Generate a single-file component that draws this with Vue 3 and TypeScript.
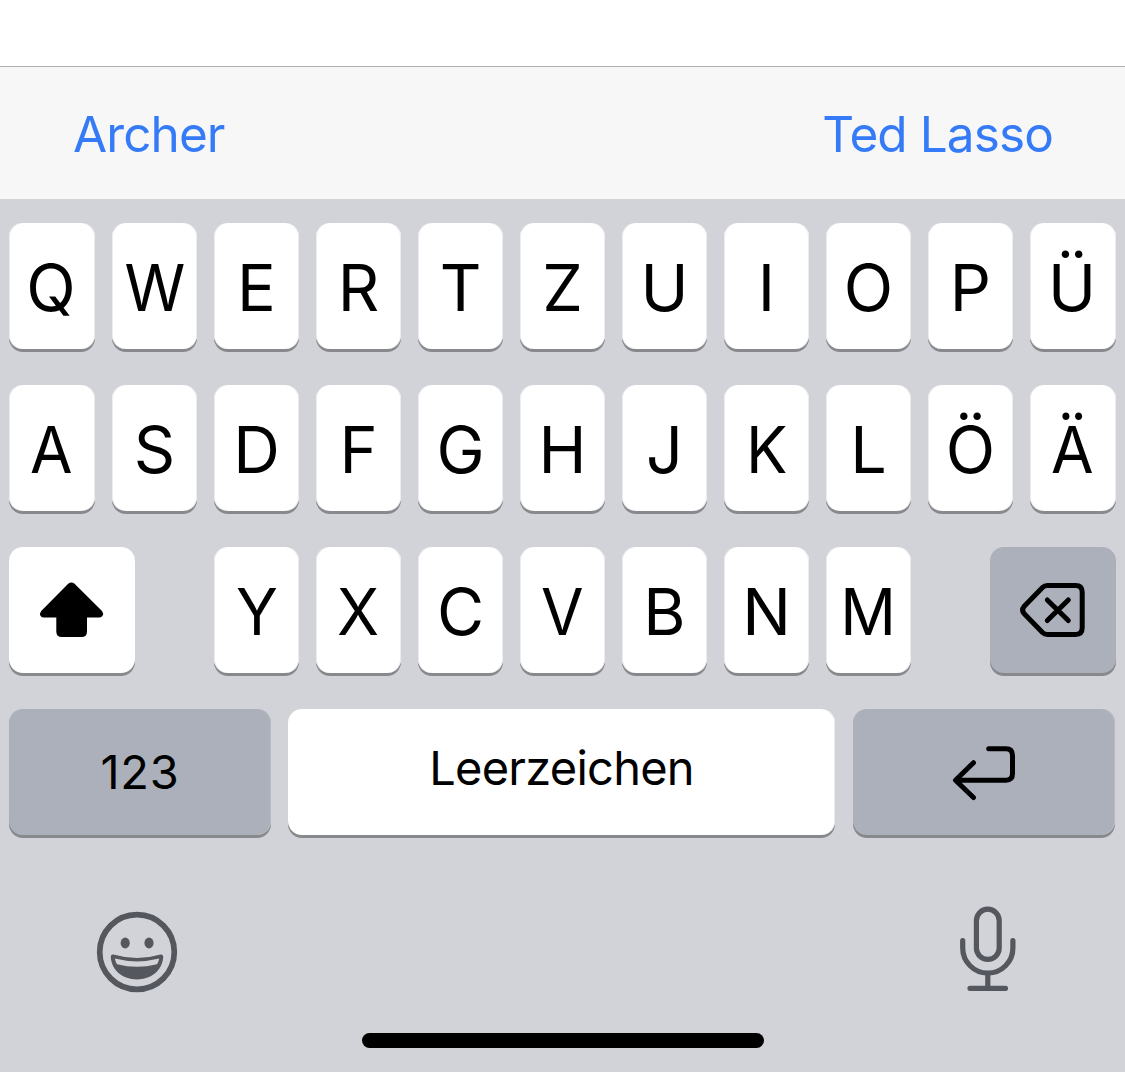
<script setup lang="ts">
const suggestions: string[] = ['Archer', 'Ted Lasso']
const topRow: string[] = [...'QWERTZUIOPÜ']
const homeRow: string[] = [...'ASDFGHJKLÖÄ']
const bottomRow: string[] = [...'YXCVBNM']

// Diagonal and wide capitals are drawn slightly narrower.
const narrow = (k: string): boolean => 'WAÄYXVKM'.includes(k)
</script>

<template>
  <main class="screen">
    <div class="content"></div>
    <div class="suggestions">
      <span v-for="s in suggestions" :key="s" class="suggestion">{{ s }}</span>
    </div>
    <section class="keyboard">
      <div class="row letters">
        <button v-for="k in topRow" :key="k" class="key"><span :class="{ narrow: narrow(k) }">{{ k }}</span></button>
      </div>
      <div class="row letters">
        <button v-for="k in homeRow" :key="k" class="key"><span :class="{ narrow: narrow(k) }">{{ k }}</span></button>
      </div>
      <div class="row third">
        <button class="key wide" aria-label="Shift">
          <svg viewBox="9 547 126 126">
            <path d="M68.2 583.8Q71.4 581.2 74.6 583.8L102 611Q104 613.600 102.400 616Q101.200 617.600 98.800 617.600H87V631.500Q87 637 81.500 637H61.800Q56.300 637 56.300 631.500V617.600H44Q41.600 617.600 40.600 616Q39.200 613.600 41.200 611Z" />
          </svg>
        </button>
        <div class="middle">
          <button v-for="k in bottomRow" :key="k" class="key"><span :class="{ narrow: narrow(k) }">{{ k }}</span></button>
        </div>
        <button class="key wide grey" aria-label="Löschen">
          <svg viewBox="990 547 126 126" class="line">
            <path d="M1047.500 585.600H1075.500Q1082.200 585.600 1082.200 592.300V627.700Q1082.200 634.400 1075.500 634.400H1047.500Q1044.500 634.400 1042.500 632.500L1024 613.500Q1021.200 610 1024 606.500L1042.500 587.500Q1044.500 585.600 1047.500 585.600Z" />
            <path d="M1047.300 600L1068.300 620.500M1068.300 600L1047.300 620.500" />
          </svg>
        </button>
      </div>
      <div class="row fourth">
        <button class="key grey label numbers"><span>123</span></button>
        <button class="key label space"><span>Leerzeichen</span></button>
        <button class="key grey return" aria-label="Return">
          <svg viewBox="853 709 262 126" class="line">
            <path d="M988.700 748.700H1006Q1012.500 748.700 1012.500 755.500V773.500Q1012.500 780.200 1006 780.200H956M973.500 762.700L955.500 780.200L973.500 797.500" />
          </svg>
        </button>
      </div>
      <div class="tools">
        <svg class="tool" width="84" height="90" viewBox="95 905 84 90">
          <circle cx="137" cy="952" r="37.300" fill="none" stroke="#54575d" stroke-width="5.700" />
          <ellipse cx="125.200" cy="943" rx="4.600" ry="5.400" />
          <ellipse cx="149" cy="943" rx="4.600" ry="5.400" />
          <path fill-rule="evenodd" d="M113.500 954.500Q137 961.500 160.500 954.500Q163.500 954.200 163.200 957.500C162 971 151 979.400 137 979.400C123 979.400 112 971 110.800 957.500Q110.500 954.200 113.500 954.500ZM114.800 958.600Q115.500 962 117 964.200Q137 969.200 157 964.200Q158.500 962 159.200 958.600Q137 964.200 114.800 958.600Z" />
        </svg>
        <svg class="tool" width="64" height="90" viewBox="956 905 64 90" fill="none" stroke="#54575d" stroke-width="5.200" stroke-linecap="round">
          <rect x="976.400" y="909.200" width="22.800" height="50.200" rx="11.400" fill="none" />
          <path fill="none" d="M962.700 940.500V948A25.100 25.100 0 0 0 1012.900 948V940.500M987.800 973.500V988M970 988.300H1005.500" />
        </svg>
      </div>
      <div class="home"></div>
    </section>
  </main>
</template>

<style>
body {
  margin: 0;
  background: #fff;
}
</style>

<style scoped>
.screen {
  width: 1125px;
  height: 1072px;
  display: flex;
  flex-direction: column;
  overflow: hidden;
  background: #fff;
  font-family: Inter, 'Liberation Sans', sans-serif;
}
.content {
  height: 66px;
}
.suggestions {
  box-sizing: border-box;
  height: 133px;
  padding: 1px 72px 0 73px;
  border-top: 1px solid #b0b0b1;
  background: #f7f7f7;
  display: flex;
  justify-content: space-between;
  align-items: center;
  color: #357bf7;
  font-size: 49.500px;
  letter-spacing: -0.900px;
}
.keyboard {
  flex: 1;
  display: flex;
  flex-direction: column;
  padding-top: 24px;
  background: #d2d3d9;
}
.row {
  display: flex;
  height: 126px;
  margin: 0 9px 36px;
}
.letters,
.middle {
  display: flex;
  gap: 17px;
}
.key {
  box-sizing: border-box;
  width: 85px;
  height: 126px;
  padding: 2px 0 0;
  border: 0;
  border-radius: 14px;
  background: #fff;
  box-shadow: 0 3px 0 #88898d, inset 1px 0 0 #ececef, inset -1px 0 0 #ececef;
  color: #000;
  font-family: inherit;
  font-size: 64.600px;
  display: flex;
  justify-content: center;
  align-items: center;
  flex: none;
}
.letters .key:first-child,
.letters .key:last-child {
  width: 86px;
  padding-right: 2px;
}
.narrow {
  display: inline-block;
  transform: scaleX(0.955);
}
.third {
  justify-content: space-between;
}
.key.wide {
  width: 126px;
  padding: 0;
  box-shadow: 0 3px 0 #88898d;
}
.key.grey {
  background: #abb0bb;
}
.key svg {
  width: 100%;
  height: 100%;
  display: block;
}
.line {
  fill: none;
  stroke: #000;
  stroke-width: 5;
  stroke-linecap: round;
  stroke-linejoin: round;
}
.fourth {
  gap: 17px;
}
.key.label {
  font-size: 47px;
}
.key.numbers,
.key.return {
  width: 262px;
  padding: 0;
  box-shadow: 0 3px 0 #88898d, inset -1px 0 0 #b8bcc5;
}
.key.numbers {
  padding-bottom: 2px;
  letter-spacing: 0.700px;
}
.key.return {
  margin-left: 1px;
}
.key.space {
  width: 547px;
  padding: 0 0 10px;
  letter-spacing: -0.750px;
  box-shadow: 0 3px 0 #88898d, inset -1px 0 0 #ececef;
}
.tools {
  display: flex;
  justify-content: space-between;
  height: 90px;
  margin: 34px 105px 0 95px;
}
.tool {
  fill: #54575d;
}
.home {
  width: 402px;
  height: 15px;
  border-radius: 8px;
  background: #000;
  margin: 38px 0 0 362px;
}
</style>
